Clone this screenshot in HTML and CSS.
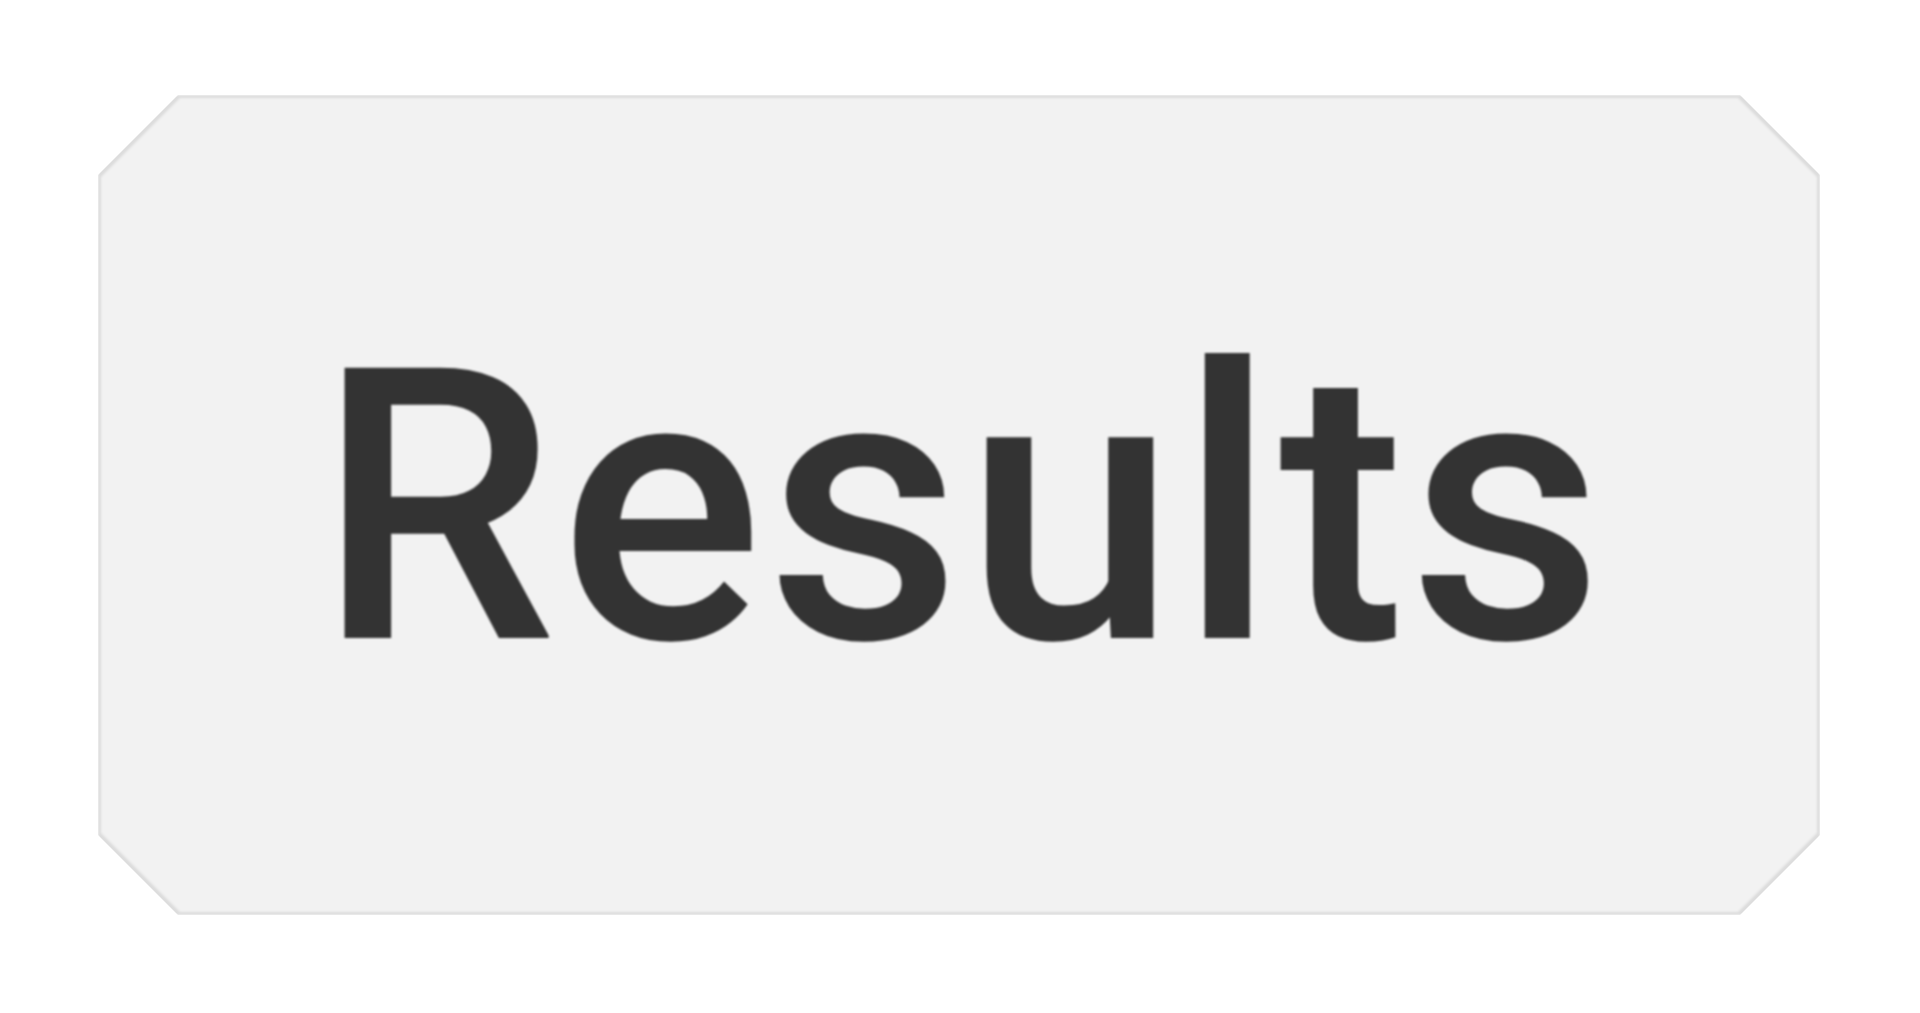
FILE: index.html
```html
<!DOCTYPE html>
<html lang="en">
<head>
<meta charset="UTF-8">
<meta name="viewport" content="width=device-width, initial-scale=1.0">
<title>Results</title>
<link rel="stylesheet" href="styles.css">
</head>
<body>
  <div class="page">
    <div class="btn-frame">
      <button class="btn-results" type="button">Results</button>
    </div>
  </div>
</body>
</html>
```

FILE: styles.css
```css
body {
  margin: 0;
  padding: 0;
  background-color: #fff;
  font-family: Roboto, "Liberation Sans", Arial, sans-serif;
}
.page {
  display: flex;
  padding: 95px 0 0 98px;
}
/* outer shape acts as the border of the cut-corner button */
.btn-frame {
  width: 1722px;
  height: 820px;
  padding: 3px;
  box-sizing: border-box;
  background-color: #dcdcdc;
  clip-path: polygon(80px 0, calc(100% - 80px) 0, 100% 80px, 100% calc(100% - 80px), calc(100% - 80px) 100%, 80px 100%, 0 calc(100% - 80px), 0 80px);
  filter: blur(1px);
}
.btn-results {
  display: flex;
  align-items: center;
  justify-content: center;
  width: 100%;
  height: 100%;
  padding: 6px 0 0 6px;
  border: none;
  background-color: #f2f2f2;
  color: #333;
  font-family: inherit;
  font-size: 380px;
  font-weight: 500;
  letter-spacing: 3px;
  line-height: 1;
  cursor: pointer;
  clip-path: polygon(79px 0, calc(100% - 79px) 0, 100% 79px, 100% calc(100% - 79px), calc(100% - 79px) 100%, 79px 100%, 0 calc(100% - 79px), 0 79px);
}
```
